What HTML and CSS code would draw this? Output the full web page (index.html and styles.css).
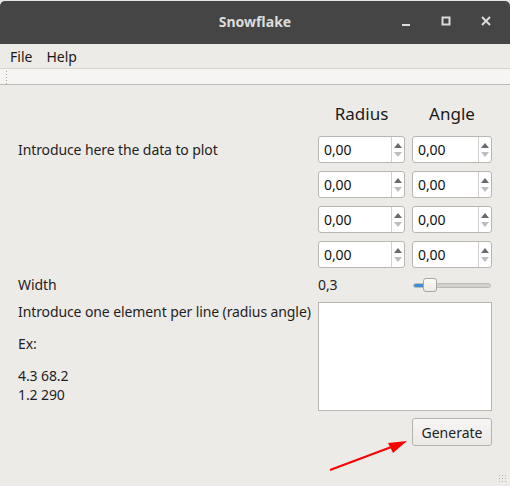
FILE: index.html
```html
<!DOCTYPE html>
<html lang="en">

<head>
  <meta charset="UTF-8" />
  <title>Snowflake</title>
  <meta name="viewport" content="width=device-width, initial-scale=1.0" />
  <link rel="stylesheet" href="styles.css">
</head>

<body>
  <div class="window">
    <header class="titlebar">
      <span class="title">Snowflake</span>
      <div class="win-buttons">
        <span class="win-btn"><svg width="12" height="12" viewBox="0 0 12 12"><rect x="2" y="9" width="8" height="2" fill="#dcdcdc"/></svg></span>
        <span class="win-btn"><svg width="12" height="12" viewBox="0 0 12 12"><rect x="2.5" y="2.5" width="7" height="7" fill="none" stroke="#dcdcdc" stroke-width="2"/></svg></span>
        <span class="win-btn"><svg width="12" height="12" viewBox="0 0 12 12"><path d="M2 2 L10 10 M10 2 L2 10" stroke="#dcdcdc" stroke-width="2"/></svg></span>
      </div>
    </header>

    <nav class="menubar">
      <span>File</span>
      <span>Help</span>
    </nav>

    <div class="toolbar"><span class="handle"></span></div>

    <main class="content">
      <div class="col-head radius">Radius</div>
      <div class="col-head angle">Angle</div>

      <div class="label intro">Introduce here the data to plot</div>
      <div class="spin"><span class="val">0,00</span><span class="arrows"><i class="up"></i><i class="down"></i></span></div>
      <div class="spin"><span class="val">0,00</span><span class="arrows"><i class="up"></i><i class="down"></i></span></div>

      <div class="spin c2"><span class="val">0,00</span><span class="arrows"><i class="up"></i><i class="down"></i></span></div>
      <div class="spin"><span class="val">0,00</span><span class="arrows"><i class="up"></i><i class="down"></i></span></div>

      <div class="spin c2"><span class="val">0,00</span><span class="arrows"><i class="up"></i><i class="down"></i></span></div>
      <div class="spin"><span class="val">0,00</span><span class="arrows"><i class="up"></i><i class="down"></i></span></div>

      <div class="spin c2"><span class="val">0,00</span><span class="arrows"><i class="up"></i><i class="down"></i></span></div>
      <div class="spin"><span class="val">0,00</span><span class="arrows"><i class="up"></i><i class="down"></i></span></div>

      <div class="label width-row">Width</div>
      <div class="width-val width-row">0,3</div>
      <div class="slider width-row">
        <span class="track"><span class="fill" style="width: 15px"></span></span>
        <span class="knob" style="left: 11px"></span>
      </div>

      <div class="help">
        <p>Introduce one element per line (radius angle)</p>
        <p>Ex:</p>
        <p>4.3 68.2<br>1.2 290</p>
      </div>
      <div class="textbox"></div>

      <button class="generate">Generate</button>
    </main>

    <svg class="pointer" width="510" height="486" viewBox="0 0 510 486">
      <line x1="330" y1="470" x2="394" y2="446" stroke="#ff0000" stroke-width="2"/>
      <polygon points="407,441 388,443 393,453" fill="#ff0000"/>
    </svg>
    <span class="grip"></span>
  </div>
</body>

</html>
```

FILE: styles.css
```css
* {
  box-sizing: border-box;
  margin: 0;
  padding: 0;
}

body {
  font-family: 'Noto Sans', 'Open Sans', sans-serif;
  background: #e6e6e6;
  color: #2e3436;
}

.window {
  position: relative;
  width: 510px;
  height: 486px;
  padding-top: 1px;
  display: flex;
  flex-direction: column;
  overflow: hidden;
}

.titlebar {
  height: 43px;
  background: #454545;
  border-radius: 5px 5px 0 0;
  display: flex;
  align-items: center;
  justify-content: center;
  position: relative;
}

.title {
  color: #dcdcdc;
  font-size: 14px;
  font-weight: bold;
  margin-top: -2px;
}

.win-buttons {
  position: absolute;
  right: 18px;
  top: 10px;
  display: flex;
  gap: 28px;
}

.win-btn {
  width: 12px;
  height: 20px;
  display: flex;
  align-items: center;
}

.menubar {
  height: 24px;
  background: #edebe8;
  display: flex;
  align-items: center;
  gap: 14px;
  padding-left: 10px;
  font-size: 14px;
  color: #1a1a1a;
}

.toolbar {
  height: 17px;
  background: #f6f5f3;
  border-top: 1px solid #d6d3ce;
  border-bottom: 1px solid #bfbcb7;
  padding: 1px 0 0 5px;
}

.handle {
  display: block;
  width: 4px;
  height: 14px;
  background-image: radial-gradient(circle, #a9a6a1 0.8px, transparent 1px);
  background-size: 3px 3px;
}

.content {
  flex: 1;
  background: #edebe8;
  display: grid;
  grid-template-columns: 293px 87px 80px;
  column-gap: 7px;
  padding: 17px 0 0 18px;
  align-content: start;
  font-size: 14px;
  letter-spacing: -0.1px;
  color: #1f1f1f;
}

.col-head {
  font-size: 17px;
  letter-spacing: 0;
  text-align: center;
  height: 26px;
  margin-bottom: 8px;
  color: #1a1a1a;
}

.radius {
  grid-column: 2;
}

.angle {
  grid-column: 3;
}

.label {
  grid-column: 1;
  align-self: center;
}

.intro {
  margin-bottom: 9px;
}

.spin {
  height: 27px;
  background: #fff;
  border: 1px solid #b9b6b1;
  border-radius: 3px;
  display: flex;
  margin-bottom: 8px;
}

.spin.c2 {
  grid-column: 2;
}

.val {
  flex: 1;
  padding-left: 5px;
  line-height: 25px;
  color: #111;
}

.arrows {
  width: 13px;
  border-left: 1px solid #d3d0cb;
  display: flex;
  flex-direction: column;
  align-items: center;
  justify-content: center;
  gap: 4px;
}

.arrows i {
  width: 0;
  height: 0;
  border-left: 4px solid transparent;
  border-right: 4px solid transparent;
}

.arrows .up {
  border-bottom: 5px solid #6a6a6a;
}

.arrows .down {
  border-top: 5px solid #bdbdbd;
}

.width-row {
  height: 18px;
  margin: 0 0 8px;
  line-height: 18px;
}

.width-val {
  grid-column: 2;
}

.slider {
  grid-column: 3;
  position: relative;
  display: flex;
  align-items: center;
  padding-left: 1px;
}

.track {
  display: block;
  width: 78px;
  height: 5px;
  background: #d4d1cc;
  border: 1px solid #bebbb6;
  border-radius: 3px;
  overflow: hidden;
}

.fill {
  display: block;
  height: 100%;
  background: #3b8ed8;
}

.knob {
  position: absolute;
  top: 2px;
  width: 14px;
  height: 14px;
  background: linear-gradient(#fbfbfa, #ecebe8);
  border: 1px solid #aaa7a2;
  border-radius: 3px;
}

.help {
  grid-column: 1;
  white-space: nowrap;
}

.help p {
  line-height: 19px;
  margin-bottom: 13px;
}

.help p:last-child {
  margin-bottom: 0;
}

.textbox {
  grid-column: 2 / 4;
  height: 109px;
  background: #fff;
  border: 1px solid #b9b6b1;
}

.generate {
  grid-column: 3;
  margin-top: 7px;
  height: 28px;
  font-family: inherit;
  font-size: 14px;
  color: #1f1f1f;
  background: linear-gradient(#f7f6f5, #ebe9e6);
  border: 1px solid #b6b3ae;
  border-radius: 3px;
}

.pointer {
  position: absolute;
  left: 0;
  top: 0;
  pointer-events: none;
}

.grip {
  position: absolute;
  right: 2px;
  bottom: 2px;
  width: 10px;
  height: 10px;
  background-image: radial-gradient(circle, #b5b2ad 0.8px, transparent 1px);
  background-size: 3px 3px;
}
```
